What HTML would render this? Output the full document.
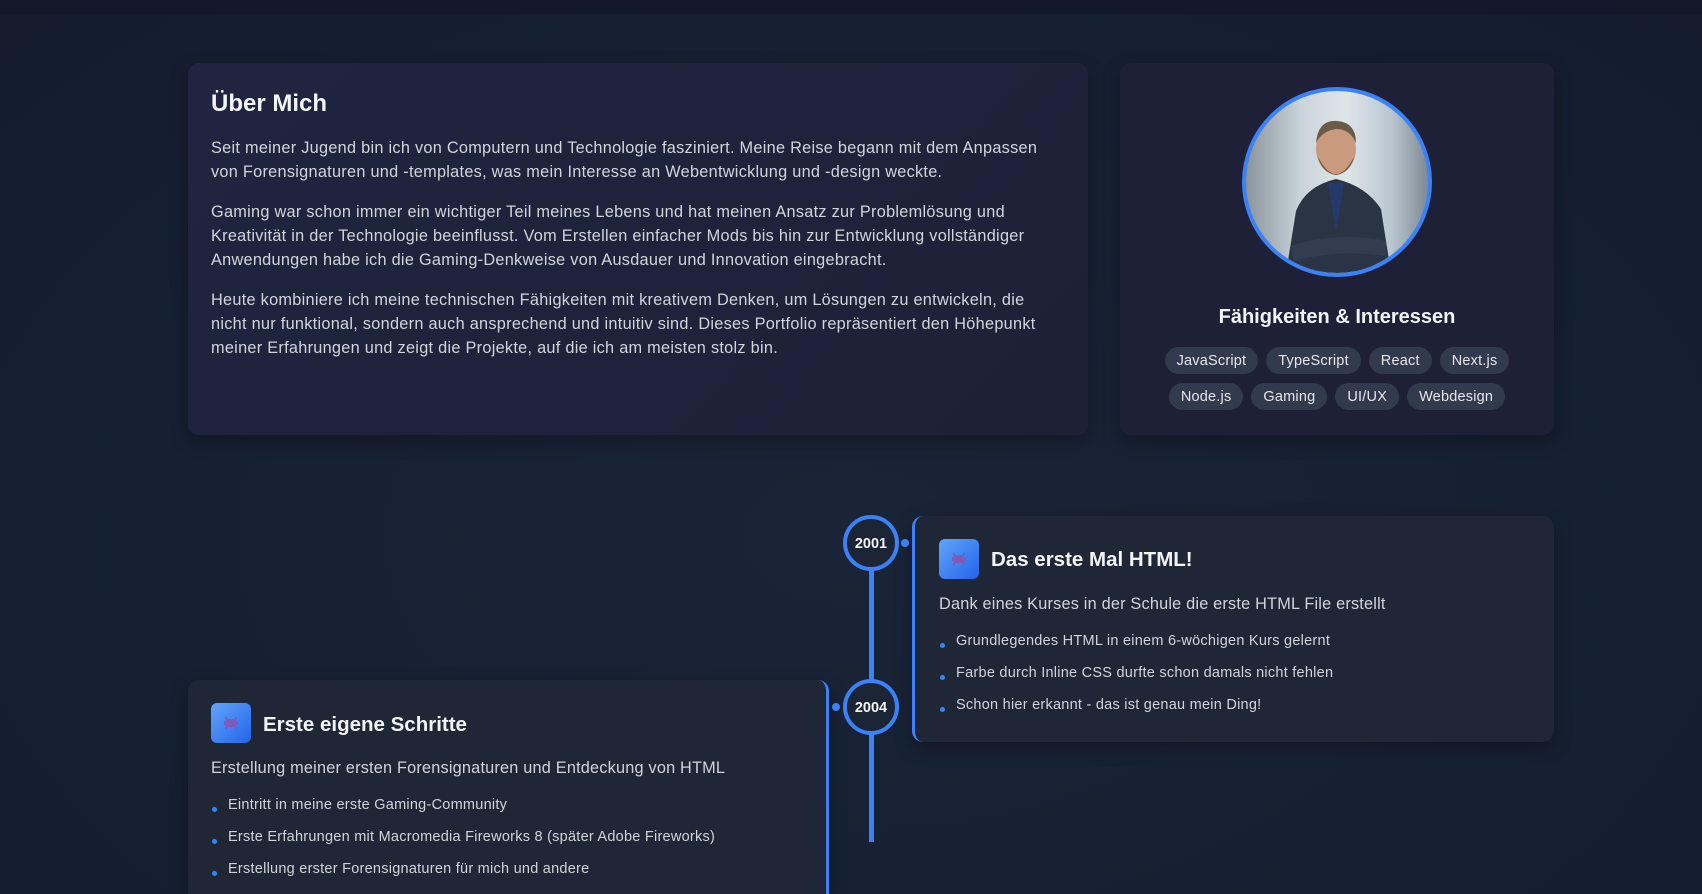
<!DOCTYPE html>
<html style="width:1702px;height:894px;overflow:hidden"><head><meta charset="utf-8"><style>
*{margin:0;padding:0;box-sizing:border-box}
body{width:1702px;height:894px;overflow:hidden;background:radial-gradient(ellipse at 50% 60%,#1a2438 0%,#162033 60%,#141c2e 100%);font-family:"Liberation Sans",sans-serif;color:#e5e7eb;position:relative}
.top{position:absolute;left:0;top:0;width:1702px;height:14px;background:#121829}
.card{position:absolute;border-radius:11px;box-shadow:0 6px 18px rgba(0,0,0,.3)}
.about{left:188px;top:63px;width:900px;height:372px;background:linear-gradient(135deg,#1f2540,#1e2036)}
.about h2{position:absolute;left:23px;top:27px;font-size:24px;font-weight:bold;color:#f3f4f6}
.about .txt{position:absolute;left:23px;top:73px;width:852px;font-size:16.3px;line-height:24px;color:#d1d5db;letter-spacing:0.28px}
.about p{margin-bottom:16px}
.side{left:1120px;top:63px;width:434px;height:372px;background:#1e2038}
.photo{position:absolute;left:122px;top:24px;width:190px;height:190px;border-radius:50%;border:4px solid #3b82f6;overflow:hidden;background:linear-gradient(90deg,#8a949c 0%,#c9d3da 30%,#dfe6ea 55%,#b9c6cf 80%,#7d8a93 100%)}
.side h3{position:absolute;left:0;width:434px;top:243px;text-align:center;font-size:20px;font-weight:bold;color:#f3f4f6}
.tags{position:absolute;left:30px;width:374px;top:284px;display:flex;flex-wrap:wrap;justify-content:center;gap:9px 8px}
.tag{background:#323a4d;color:#e5e7eb;font-size:14.5px;height:27px;line-height:28px;padding:0 12px;border-radius:14px;letter-spacing:0.2px}
.line{position:absolute;left:869px;top:560px;width:5px;height:282px;background:#3b82f6}
.yr{position:absolute;width:56px;height:56px;border-radius:50%;border:4px solid #3b82f6;background:#1c2536;color:#f3f4f6;font-weight:bold;font-size:14.5px;text-align:center;line-height:50px}
.dot{position:absolute;width:8px;height:8px;border-radius:50%;background:#3b82f6}
.tl{background:#1f2636;position:absolute}
.r{left:912px;top:516px;width:642px;height:226px;border-left:3px solid #3b82f6}
.l{left:188px;top:680px;width:641px;height:214px;border-right:3px solid #3b82f6}
.ic{position:absolute;width:40px;height:40px;border-radius:6px;background:linear-gradient(135deg,#60a5fa,#2563eb)}
.tl h4{position:absolute;font-size:20.5px;font-weight:bold;color:#f3f4f6}
.tl .d{position:absolute;font-size:16.3px;color:#d1d5db;letter-spacing:0.2px}
.tl ul{position:absolute;list-style:none;font-size:14.5px;color:#d1d5db;letter-spacing:0.25px}
.tl li{height:32px;position:relative;padding-left:17px}
.tl li:before{content:"";position:absolute;left:1px;top:10px;width:5px;height:5px;border-radius:50%;background:#3b82f6}
</style></head><body>
<div class="top"></div>
<div class="card about"><h2>Über Mich</h2><div class="txt">
<p>Seit meiner Jugend bin ich von Computern und Technologie fasziniert. Meine Reise begann mit dem Anpassen von Forensignaturen und -templates, was mein Interesse an Webentwicklung und -design weckte.</p>
<p>Gaming war schon immer ein wichtiger Teil meines Lebens und hat meinen Ansatz zur Problemlösung und Kreativität in der Technologie beeinflusst. Vom Erstellen einfacher Mods bis hin zur Entwicklung vollständiger Anwendungen habe ich die Gaming-Denkweise von Ausdauer und Innovation eingebracht.</p>
<p>Heute kombiniere ich meine technischen Fähigkeiten mit kreativem Denken, um Lösungen zu entwickeln, die nicht nur funktional, sondern auch ansprechend und intuitiv sind. Dieses Portfolio repräsentiert den Höhepunkt meiner Erfahrungen und zeigt die Projekte, auf die ich am meisten stolz bin.</p></div></div>
<div class="card side">
<div class="photo"><svg width="182" height="182" viewBox="0 0 182 182">
<path d="M40 182 L50 120 Q60 95 90 88 Q120 95 135 118 L145 182Z" fill="#2a3445"/>
<path d="M82 92 L90 140 L98 92Z" fill="#253a6a"/>
<path d="M45 155 Q90 140 140 150 L140 165 Q90 158 48 170Z" fill="#323d4f"/>
<ellipse cx="90" cy="58" rx="20" ry="25" fill="#c99a7e"/>
<path d="M72 66 Q90 100 108 66 Q104 82 90 84 Q76 82 72 66Z" fill="#7a5a3e"/>
<path d="M70 52 Q72 28 92 30 Q110 32 110 52 Q104 38 90 38 Q76 40 70 52Z" fill="#6b5a48"/>
</svg></div>
<h3>Fähigkeiten &amp; Interessen</h3>
<div class="tags"><span class="tag">JavaScript</span><span class="tag">TypeScript</span><span class="tag">React</span><span class="tag">Next.js</span><span class="tag">Node.js</span><span class="tag">Gaming</span><span class="tag">UI/UX</span><span class="tag">Webdesign</span></div>
</div>
<div class="line"></div>
<div class="tl card r" style="border-radius:11px">
<div class="ic" style="left:24px;top:23px"><svg width="40" height="40"><g fill="#7c5cb8"><rect x="15" y="16" width="10" height="8"/><rect x="13" y="18" width="14" height="4"/><rect x="14" y="14" width="2" height="2"/><rect x="24" y="14" width="2" height="2"/><rect x="14" y="24" width="2" height="2"/><rect x="24" y="24" width="2" height="2"/></g></svg></div>
<h4 style="left:76px;top:32px">Das erste Mal HTML!</h4>
<div class="d" style="left:24px;top:79px">Dank eines Kurses in der Schule die erste HTML File erstellt</div>
<ul style="left:24px;top:117px"><li>Grundlegendes HTML in einem 6-wöchigen Kurs gelernt</li><li>Farbe durch Inline CSS durfte schon damals nicht fehlen</li><li>Schon hier erkannt - das ist genau mein Ding!</li></ul>
</div>
<div class="tl card l" style="border-radius:11px 11px 0 0">
<div class="ic" style="left:23px;top:23px"><svg width="40" height="40"><g fill="#7c5cb8"><rect x="15" y="16" width="10" height="8"/><rect x="13" y="18" width="14" height="4"/><rect x="14" y="14" width="2" height="2"/><rect x="24" y="14" width="2" height="2"/><rect x="14" y="24" width="2" height="2"/><rect x="24" y="24" width="2" height="2"/></g></svg></div>
<h4 style="left:75px;top:33px">Erste eigene Schritte</h4>
<div class="d" style="left:23px;top:79px">Erstellung meiner ersten Forensignaturen und Entdeckung von HTML</div>
<ul style="left:23px;top:117px"><li>Eintritt in meine erste Gaming-Community</li><li>Erste Erfahrungen mit Macromedia Fireworks 8 (später Adobe Fireworks)</li><li>Erstellung erster Forensignaturen für mich und andere</li></ul>
</div>
<div class="yr" style="left:843px;top:515px">2001</div>
<div class="yr" style="left:843px;top:679px">2004</div>
<div class="dot" style="left:901px;top:539px"></div>
<div class="dot" style="left:832px;top:703px"></div>
</body></html>
